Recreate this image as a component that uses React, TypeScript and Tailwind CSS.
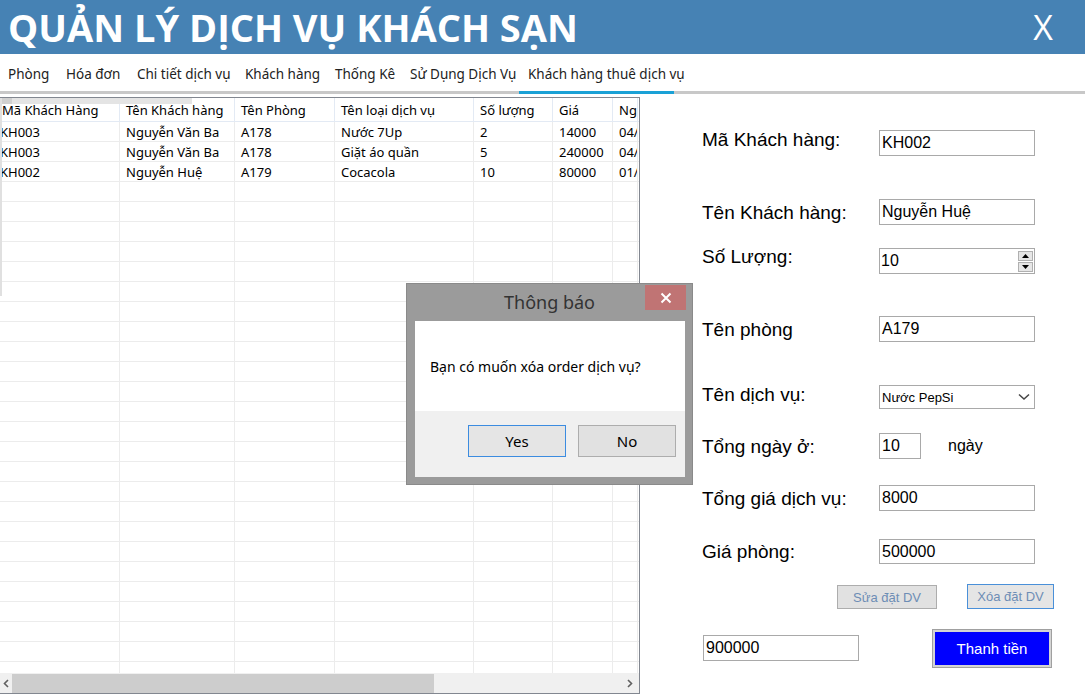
import React from 'react';

const tabs = [
    { label: 'Phòng', w: 'w-[58px]' },
    { label: 'Hóa đơn', w: 'w-[71px]' },
    { label: 'Chi tiết dịch vụ', w: 'w-[108px]' },
    { label: 'Khách hàng', w: 'w-[90px]' },
    { label: 'Thống Kê', w: 'w-[75px]' },
    { label: 'Sử Dụng Dịch Vụ', w: 'w-[117px]' },
];

const colWidths = ['w-[120px]', 'w-[115px]', 'w-[100px]', 'w-[139px]', 'w-[79px]', 'w-[60px]', 'w-[25px]'];
const headers = ['Mã Khách Hàng', 'Tên Khách hàng', 'Tên Phòng', 'Tên loại dịch vụ', 'Số lượng', 'Giá', 'Ng'];

const rows: string[][] = [
    ['KH003', 'Nguyễn Văn Ba', 'A178', 'Nước 7Up', '2', '14000', '04/'],
    ['KH003', 'Nguyễn Văn Ba', 'A178', 'Giặt áo quần', '5', '240000', '04/'],
    ['KH002', 'Nguyễn Huệ', 'A179', 'Cocacola', '10', '80000', '01/'],
];

const DataGrid: React.FC = () => {
    const allRows = [...rows, ...Array.from({ length: 25 }, () => ['', '', '', '', '', '', ''])];
    return (
        <div className="relative w-[640px] mt-[3px] h-[597px] flex flex-col border-t border-r border-b border-[#828790] bg-white overflow-hidden font-['Noto_Sans',sans-serif] text-[13px] text-black">
            {/* header */}
            <div className="flex h-[24px] border-b border-[#e3eaf4] shrink-0">
                {headers.map((h, i) => (
                    <div
                        key={h}
                        className={`${colWidths[i]} shrink-0 h-full flex items-center overflow-hidden whitespace-nowrap border-r border-[#e3eaf4] pt-[3px] ${i === 0 ? 'pl-[2px]' : 'pl-[6px]'}`}
                    >
                        {h}
                    </div>
                ))}
            </div>
            {/* rows */}
            <div className="flex-1 overflow-hidden">
                {allRows.map((r, ri) => (
                    <div key={ri} className="flex h-[20px] border-b border-[#ececec]">
                        {r.map((c, ci) => (
                            <div
                                key={ci}
                                className={`${colWidths[ci]} shrink-0 h-full flex items-center overflow-hidden whitespace-nowrap border-r border-[#ececec] pt-[3px] ${ci === 0 ? 'pl-0' : 'pl-[6px]'}`}
                            >
                                {c}
                            </div>
                        ))}
                    </div>
                ))}
            </div>
            {/* horizontal scrollbar */}
            <div className="h-[20px] shrink-0 bg-[#f0f0f0] flex items-center">
                <div className="w-[12px] flex justify-center">
                    <svg width="6" height="9" viewBox="0 0 6 9">
                        <polyline points="5,1 1.5,4.5 5,8" fill="none" stroke="#606060" strokeWidth="1.6" />
                    </svg>
                </div>
                <div className="w-[422px] h-[19px] bg-[#cdcdcd]" />
                <div className="flex-1" />
                <div className="w-[18px] flex justify-center">
                    <svg width="6" height="9" viewBox="0 0 6 9">
                        <polyline points="1,1 4.5,4.5 1,8" fill="none" stroke="#606060" strokeWidth="1.6" />
                    </svg>
                </div>
            </div>
            {/* leftover paint artifacts */}
            <div className="absolute left-0 top-[-3px] w-[192px] h-[9px] bg-[#e4e4e4]" />
            <div className="absolute left-0 top-[-3px] w-[12px] h-[9px] bg-[#d0d0d0]" />
            <div className="absolute left-0 top-0 w-[2px] h-[198px] bg-[#e0e0e0]" />
        </div>
    );
};

const TextBox: React.FC<{ value: string; w?: string; h?: string }> = ({ value, w = 'w-[156px]', h = 'h-[26px]' }) => (
    <div className={`${w} ${h} shrink-0 border border-[#a9a9a9] bg-white flex items-center pl-[2px] text-[16px] leading-none text-black`}>
        {value}
    </div>
);

const FormRow: React.FC<{ label: string; mt: string; h?: string; lblOffset?: string; children: React.ReactNode }> = ({
    label,
    mt,
    h = 'h-[26px]',
    lblOffset = '',
    children,
}) => (
    <div className={`flex items-center ${h} ${mt}`}>
        <div className={`w-[177px] shrink-0 text-[19px] leading-none whitespace-nowrap text-black ${lblOffset}`}>{label}</div>
        {children}
    </div>
);

const RightForm: React.FC = () => (
    <div className="flex-1 flex flex-col pl-[62px] font-['Liberation_Sans',Arial,sans-serif]">
        <FormRow label="Mã Khách hàng:" mt="mt-[36px]" lblOffset="-translate-y-[4px]">
            <TextBox value="KH002" />
        </FormRow>
        <FormRow label="Tên Khách hàng:" mt="mt-[43px]">
            <TextBox value="Nguyễn Huệ" />
        </FormRow>
        <FormRow label="Số Lượng:" mt="mt-[23px]" lblOffset="-translate-y-[5px]">
            <div className="w-[156px] h-[26px] border border-[#a9a9a9] bg-white flex items-center pl-[1px] text-[16px] leading-none">
                <span className="flex-1">10</span>
                <div className="flex flex-col mr-[1px] gap-[1px]">
                    <div className="w-[15px] h-[10px] bg-[#e6e6e6] border border-[#b0b0b0] flex items-center justify-center">
                        <svg width="7" height="4" viewBox="0 0 7 4">
                            <polygon points="0,4 7,4 3.5,0" fill="#000" />
                        </svg>
                    </div>
                    <div className="w-[15px] h-[10px] bg-[#e6e6e6] border border-[#b0b0b0] flex items-center justify-center">
                        <svg width="7" height="4" viewBox="0 0 7 4">
                            <polygon points="0,0 7,0 3.5,4" fill="#000" />
                        </svg>
                    </div>
                </div>
            </div>
        </FormRow>
        <FormRow label="Tên phòng" mt="mt-[42px]">
            <TextBox value="A179" />
        </FormRow>
        <FormRow label="Tên dịch vụ:" mt="mt-[43px]" h="h-[24px]" lblOffset="-translate-y-[3px]">
            <div className="w-[156px] h-[24px] border border-[#a9a9a9] bg-white flex items-center pl-[2px] text-[13px] leading-none text-black">
                <span className="flex-1">Nước PepSi</span>
                <svg width="12" height="8" viewBox="0 0 12 8" className="mr-[4px]">
                    <polyline points="1,1.5 6,6 11,1.5" fill="none" stroke="#444" strokeWidth="1.5" />
                </svg>
            </div>
        </FormRow>
        <FormRow label="Tổng ngày ở:" mt="mt-[24px]">
            <TextBox value="10" w="w-[42px]" />
            <span className="ml-[27px] text-[16px] leading-none text-black">ngày</span>
        </FormRow>
        <FormRow label="Tổng giá dịch vụ:" mt="mt-[26px]">
            <TextBox value="8000" />
        </FormRow>
        <FormRow label="Giá phòng:" mt="mt-[28px]" h="h-[25px]">
            <TextBox value="500000" h="h-[25px]" />
        </FormRow>
        <div className="flex mt-[21px] pl-[135px] gap-[30px] text-[13px] leading-none text-[#6d8db5]">
            <div className="w-[100px] h-[24px] border border-[#adadad] bg-[#e1e1e1] flex items-center justify-center">Sửa đặt DV</div>
            <div className="w-[87px] h-[25px] border border-[#4a90d9] bg-[#e5e5e5] flex items-center justify-center -mt-[1px]">Xóa đặt DV</div>
        </div>
        <div className="flex items-start mt-[20px]">
            <div className="mt-[6px] ml-[1px]">
                <TextBox value="900000" />
            </div>
            <div className="ml-[73px] w-[120px] h-[39px] border-[3px] border-[#d4d4d4] outline outline-1 outline-[#a0a0a0] -outline-offset-1 bg-[#0000ff] flex items-center justify-center text-white text-[15px] leading-none">
                Thanh tiền
            </div>
        </div>
    </div>
);

const Dialog: React.FC = () => (
    <div className="absolute left-[406px] top-[283px] w-[287px] h-[202px] bg-[#9b9b9b] border border-[#8a8a8a] flex flex-col font-['Noto_Sans',sans-serif]">
        <div className="h-[37px] relative flex items-center justify-center text-[18px] text-[#333]">
            Thông báo
            <div className="absolute right-[6px] top-[1px] w-[41px] h-[25px] bg-[#c07474] flex items-center justify-center">
                <svg width="12" height="12" viewBox="0 0 12 12">
                    <path d="M1.5 1.5 L10.5 10.5 M10.5 1.5 L1.5 10.5" stroke="#fff" strokeWidth="2" />
                </svg>
            </div>
        </div>
        <div className="ml-[8px] mr-[7px] mb-[7px] flex-1 flex flex-col">
            <div className="h-[90px] bg-white flex items-center pl-[15px] text-[14px] text-black">
                Bạn có muốn xóa order dịch vụ?
            </div>
            <div className="flex-1 bg-[#f0f0f0] flex items-start justify-end pt-[14px] pr-[9px] gap-[12px] text-[15px] text-black">
                <div className="w-[98px] h-[32px] border border-[#3c8ce0] bg-[#e5e5e5] flex items-center justify-center">Yes</div>
                <div className="w-[98px] h-[32px] border border-[#adadad] bg-[#e1e1e1] flex items-center justify-center">No</div>
            </div>
        </div>
    </div>
);

export default function App() {
    return (
        <div className="relative w-[1085px] h-[696px] bg-white overflow-hidden flex flex-col">
            <div className="h-[54px] bg-[#4682b4] flex items-center justify-between pl-[8px] pr-[32px]">
                <h1 className="text-[38px] font-bold text-white font-['Open_Sans',sans-serif] leading-none">
                    QUẢN LÝ DỊCH VỤ KHÁCH SẠN
                </h1>
                <span className="text-[34px] text-white font-['Open_Sans',sans-serif] leading-none">X</span>
            </div>
            <div className="h-[37px] flex items-center pt-[3px] font-['Noto_Sans',sans-serif] text-[13.5px] text-[#222]">
                {tabs.map((t) => (
                    <div key={t.label} className={`${t.w} pl-2 whitespace-nowrap`}>
                        {t.label}
                    </div>
                ))}
                <div className="w-[155px] pl-[9px] whitespace-nowrap">Khách hàng thuê dịch vụ</div>
            </div>
            <div className="h-[3px] bg-[#c8c8c8] flex">
                <div className="ml-[519px] w-[155px] h-full bg-[#1aa1d6]" />
            </div>
            <div className="flex-1 flex">
                <DataGrid />
                <RightForm />
            </div>
            <Dialog />
        </div>
    );
}
